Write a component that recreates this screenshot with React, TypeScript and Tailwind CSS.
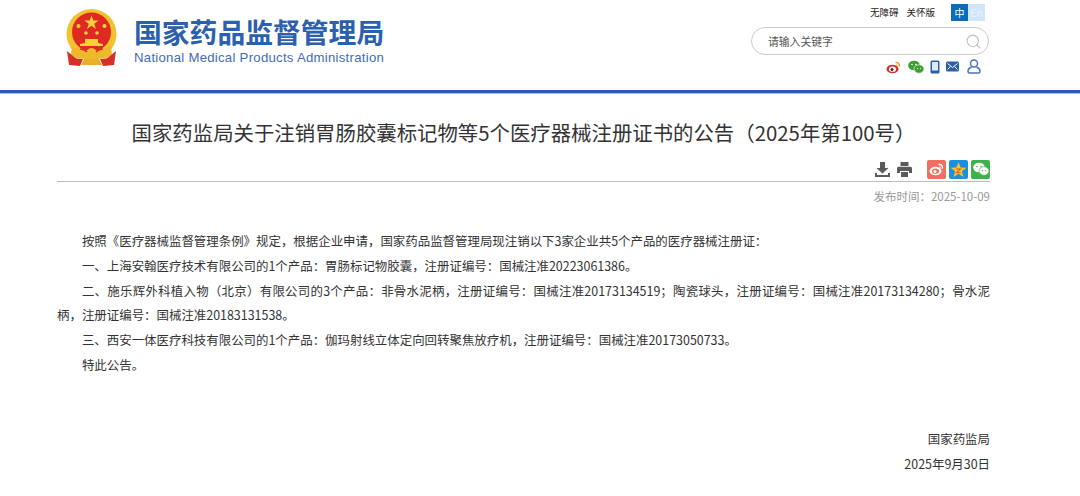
import { Search } from 'lucide-react';

const cjk = "font-['Noto_Sans_CJK_SC',sans-serif]";

const Emblem = () => (
  <svg width="51" height="58" viewBox="0 0 51 58" className="shrink-0">
    <circle cx="25.5" cy="25" r="25" fill="#f2c230" />
    <circle cx="25.5" cy="23" r="19.5" fill="#de2a20" />
    <polygon points="25.5,6.5 27.3,11.6 32.6,11.6 28.3,14.8 29.9,20 25.5,16.8 21.1,20 22.7,14.8 18.4,11.6 23.7,11.6" fill="#f6d23c" />
    <circle cx="12.500" cy="17" r="2" fill="#f6d23c" />
    <circle cx="38.500" cy="17" r="2" fill="#f6d23c" />
    <circle cx="20" cy="24" r="1.800" fill="#f6d23c" />
    <circle cx="31" cy="24" r="1.800" fill="#f6d23c" />
    <path d="M14 37h23v-2l-5-1v-4H19v4l-5 1z" fill="#f6d23c" />
    <path d="M6 37c5 3 10 2 14 5 2-2 4-3 5.500-3s3.500 1 5.500 3c4-3 9-2 14-5l1 9c-4 4-12 4-20.500 4S9 50 5 46z" fill="#efb92c" />
    <path d="M14 40c3 0 5 1 7 3M37 40c-3 0-5 1-7 3" stroke="#d6302a" strokeWidth="1.500" fill="none" />
    <path d="M1 42l6 5c3 3 6 3 10 3l-3 7-11-1z" fill="#d6302a" />
    <path d="M50 42l-6 5c-3 3-6 3-10 3l3 7 11-1z" fill="#d6302a" />
    <path d="M18 50h15l3 6H15z" fill="#e9b02c" />
  </svg>
);

const Weibo = ({ body = '#e02b2b', hole = '#fff', pupil = '#333', tail = '#f0a020' }: { body?: string; hole?: string; pupil?: string; tail?: string }) => (
  <svg width="16" height="14" viewBox="0 0 16 14">
    <ellipse cx="6.500" cy="9" rx="6" ry="4.300" fill={body} />
    <ellipse cx="6.500" cy="9.200" rx="3.500" ry="2.600" fill={hole} />
    <circle cx="6" cy="9.500" r="1.500" fill={pupil} />
    <path d="M9.500 2.500c2.500-.6 4.500 1.400 3.800 4" fill="none" stroke={tail} strokeWidth="1.500" />
    <path d="M10 5c1-.3 1.700.3 1.500 1.500" fill="none" stroke={tail} strokeWidth="1" />
  </svg>
);

const Wechat = ({ fg = '#3f9f30', eye = '#fff' }: { fg?: string; eye?: string }) => (
  <svg width="16" height="14" viewBox="0 0 16 14">
    <ellipse cx="6" cy="5.500" rx="5.800" ry="4.800" fill={fg} />
    <ellipse cx="11" cy="9" rx="5" ry="4.200" fill={fg} stroke={eye} strokeWidth=".6" />
    <circle cx="4" cy="4.500" r=".8" fill={eye} />
    <circle cx="8" cy="4.500" r=".8" fill={eye} />
    <circle cx="9.500" cy="8.500" r=".6" fill={eye} />
    <circle cx="12.500" cy="8.500" r=".6" fill={eye} />
  </svg>
);

const Phone = () => (
  <svg width="10" height="14" viewBox="0 0 10 14">
    <rect x=".5" y=".5" width="9" height="13" rx="1.500" fill="#2c5fae" />
    <rect x="2" y="2" width="6" height="8.500" fill="#dfe8f6" />
  </svg>
);

const Envelope = () => (
  <svg width="13" height="11" viewBox="0 0 13 11">
    <rect width="13" height="10" y=".5" rx="1.500" fill="#2c5fae" />
    <path d="M1.500 2.500l5 4 5-4M1.500 8.500l3-3M11.500 8.500l-3-3" stroke="#fff" strokeWidth="1" fill="none" />
  </svg>
);

const User = () => (
  <svg width="14" height="15" viewBox="0 0 14 15" fill="none" stroke="#4a74c0" strokeWidth="1.500">
    <circle cx="7" cy="4.500" r="3.500" />
    <path d="M4.500 8c-2 .8-3.500 2.500-3.500 4 0 1 .6 2 1.500 2h9c.9 0 1.500-1 1.500-2 0-1.500-1.500-3.200-3.500-4" />
  </svg>
);

const SolidDownload = () => (
  <svg width="15" height="15" viewBox="0 0 15 15" fill="#5a5a5a">
    <path d="M5 0h5v6h3.500l-6 5.500-6-5.500H5z" />
    <path d="M0 11h2v2h11v-2h2v4H0z" />
  </svg>
);

const SolidPrinter = () => (
  <svg width="15" height="15" viewBox="0 0 15 15" fill="#5a5a5a">
    <path d="M3.500 0h8v4h-8z" />
    <path d="M1.500 4.800h12c.8 0 1.500.7 1.500 1.500V11h-3V9H3v2H0V6.300c0-.8.7-1.500 1.500-1.500z" />
    <path d="M4 10h7v5H4z" />
  </svg>
);

const ShareTile = ({ color, children }: { color: string; children: React.ReactNode }) => (
  <span className={`flex h-[19px] w-[19px] items-center justify-center rounded-[2px] ${color}`}>{children}</span>
);

const paragraphs = [
  '按照《医疗器械监督管理条例》规定，根据企业申请，国家药品监督管理局现注销以下3家企业共5个产品的医疗器械注册证：',
  '一、上海安翰医疗技术有限公司的1个产品：胃肠标记物胶囊，注册证编号：国械注准20223061386。',
  '二、施乐辉外科植入物（北京）有限公司的3个产品：非骨水泥柄，注册证编号：国械注准20173134519；陶瓷球头，注册证编号：国械注准20173134280；骨水泥柄，注册证编号：国械注准20183131538。',
  '三、西安一体医疗科技有限公司的1个产品：伽玛射线立体定向回转聚焦放疗机，注册证编号：国械注准20173050733。',
  '特此公告。',
];

export default function App() {
  return (
    <div className={`h-[496px] w-[1080px] overflow-hidden bg-white ${cjk}`}>
      <header className="flex h-[90px] justify-between pl-[66px] pr-[91px]">
        <div className="flex items-start gap-[17px] pt-[9px]">
          <Emblem />
          <div className="w-[251px] pt-[5px]">
            <div className="text-[27.800px] leading-[34px] font-bold whitespace-nowrap text-[#2c5fae]">国家药品监督管理局</div>
            <div className="mt-[2px] text-[13.200px] leading-[16px] tracking-[.26px] whitespace-nowrap text-[#3f6db5] font-['Liberation_Sans',sans-serif]">National Medical Products Administration</div>
          </div>
        </div>
        <div className="flex w-[238px] flex-col items-end">
          <div className="flex items-center pr-[4px] pt-[4px] text-[9.500px] leading-[17px] text-[#222]">
            <span>无障碍</span>
            <span className="ml-[8px]">关怀版</span>
            <span className="ml-[16px] flex h-[17px] w-[17px] items-center justify-center bg-[#0b6cbc] text-[10px] text-white">中</span>
            <span className="flex h-[17px] w-[17px] items-center justify-center bg-[#cfe6fb] text-[10px] text-[#eef6fd]">En</span>
          </div>
          <div className="mt-[6px] flex h-[28px] w-[238px] items-center justify-between rounded-full border border-[#cccccc] pl-[16px] pr-[6px] text-[10.800px] text-[#555]">
            <span>请输入关键字</span>
            <Search size={17} strokeWidth={1.500} className="text-[#bdbdbd]" />
          </div>
          <div className="mt-[4px] flex items-center pr-[8px]">
            <Weibo />
            <span className="ml-[6px]"><Wechat /></span>
            <span className="ml-[6px]"><Phone /></span>
            <span className="ml-[6px]"><Envelope /></span>
            <span className="ml-[8px]"><User /></span>
          </div>
        </div>
      </header>

      <div className="h-[4px] border-b border-[#a9c1e6] bg-[#265bad]" />

      <main className="mx-[57px] w-[933px]">
        <h1 className="mt-[24px] text-center text-[20.400px] leading-[29px] font-normal whitespace-nowrap text-[#333]">
          国家药监局关于注销胃肠胶囊标记物等5个医疗器械注册证书的公告（2025年第100号）
        </h1>
        <div className="mt-[13px] flex h-[22px] items-center justify-end border-b border-[#bdbdbd] pb-[3px]">
          <SolidDownload />
          <span className="ml-[7px] mr-[15px]"><SolidPrinter /></span>
          <ShareTile color="bg-[#f0705f]"><Weibo body="#fff" hole="#f0705f" pupil="#fff" tail="#fff" /></ShareTile>
          <span className="ml-[3px]">
            <ShareTile color="bg-[#1a8fe0]">
              <svg width="17" height="17" viewBox="0 0 16 16">
                <polygon points="8,1 10,6 15.500,6.300 11.200,9.700 12.700,15 8,12 3.300,15 4.800,9.700 .5,6.300 6,6" fill="#f6c52b" />
                <path d="M6 7.500h4l-4 3.500h4" stroke="#e2562a" strokeWidth="1" fill="none" />
              </svg>
            </ShareTile>
          </span>
          <span className="ml-[3px]">
            <ShareTile color="bg-[#3cb34a]"><Wechat fg="#fff" eye="#3cb34a" /></ShareTile>
          </span>
        </div>
        <div className="mt-[6px] text-right text-[11.500px] leading-[16px] text-[#999]">发布时间：2025-10-09</div>

        <article className="mt-[25px] text-justify text-[12.440px] leading-[24.800px] text-[#333]">
          {paragraphs.map((p) => (
            <p key={p} className="indent-[2em]">{p}</p>
          ))}
          <div className="mt-[49px] text-right">国家药监局</div>
          <div className="text-right">2025年9月30日</div>
        </article>
      </main>
    </div>
  );
}
